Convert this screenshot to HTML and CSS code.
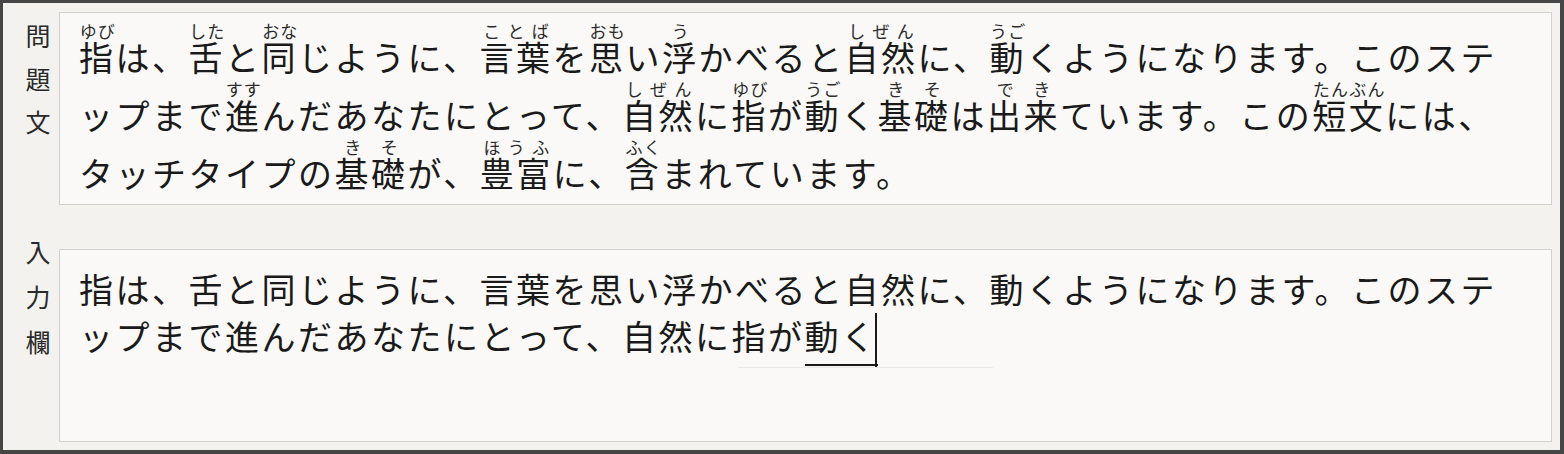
FILE: index.html
```html
<!DOCTYPE html>
<html lang="ja">
<head>
<meta charset="utf-8">
<title>タイピング練習</title>
<link rel="stylesheet" href="styles.css">
</head>
<body>
<div class="frame">
  <div class="row row-question">
    <div class="label label-question">問題文</div>
    <div class="box question"><ruby>指<rt>ゆび</rt></ruby>は、<ruby>舌<rt>した</rt></ruby>と<ruby>同<rt>おな</rt></ruby>じように、<ruby>言葉<rt>ことば</rt></ruby>を<ruby>思<rt>おも</rt></ruby>い<ruby>浮<rt>う</rt></ruby>かべると<ruby>自然<rt>しぜん</rt></ruby>に、<ruby>動<rt>うご</rt></ruby>くようになります。このステップまで<ruby>進<rt>すす</rt></ruby>んだあなたにとって、<ruby>自然<rt>しぜん</rt></ruby>に<ruby>指<rt>ゆび</rt></ruby>が<ruby>動<rt>うご</rt></ruby>く<ruby>基礎<rt>きそ</rt></ruby>は<ruby>出来<rt>でき</rt></ruby>ています。この<ruby>短文<rt>たんぶん</rt></ruby>には、タッチタイプの<ruby>基礎<rt>きそ</rt></ruby>が、<ruby>豊富<rt>ほうふ</rt></ruby>に、<ruby>含<rt>ふく</rt></ruby>まれています。</div>
  </div>
  <div class="row row-input">
    <div class="label label-input">入力欄</div>
    <div class="box input">指は、舌と同じように、言葉を思い浮かべると自然に、動くようになります。このステップまで進んだあなたにとって、自然に指が<span class="compose">動く</span><span class="caret"></span><span class="ime-line"></span></div>
  </div>
</div>
</body>
</html>
```
FILE: styles.css
```css
* { box-sizing: border-box; }
html, body { margin: 0; padding: 0; }
body {
  width: 1564px;
  height: 454px;
  font-family: "Noto Sans CJK JP", "Noto Sans", sans-serif;
  color: #1a1a1a;
  background: #f3f2ef;
}
.frame {
  width: 1564px;
  height: 454px;
  border-style: solid;
  border-color: #464646;
  border-width: 3px 4px 4px 3px;
  background: #f3f2ef;
  padding: 9px 8px 8px 0;
  display: flex;
  flex-direction: column;
  gap: 44px;
}
.row {
  display: grid;
  grid-template-columns: 56px 1fr;
  height: 193px;
}
.label {
  writing-mode: vertical-rl;
  font-size: 25px;
  line-height: 1;
  color: #2a2a2a;
  margin-left: 22px;
  width: 25px;
}
.label-question { letter-spacing: 18px; margin-top: 12px; }
.label-input { letter-spacing: 20px; margin-top: -9px; }
.box {
  position: relative;
  background: #faf9f7;
  border: 1px solid #d3d1cd;
  padding: 0 40px 0 19px;
  font-size: 34px;
  letter-spacing: 2.5px;
  line-break: loose;
  white-space: normal;
  overflow: hidden;
}
.question { padding-top: 15px; line-height: 58px; }
.input { padding-top: 15px; line-height: 47px; }
rt {
  font-size: 17px;
  letter-spacing: 0;
  line-height: 0.2;
  color: #2b2b2b;
}
.compose {
  padding-bottom: 4px;
  border-bottom: 2px solid #1a1a1a;
}
.caret {
  display: inline-block;
  width: 2px;
  height: 54px;
  background: #1a1a1a;
  vertical-align: -16.6px;
  margin-left: -2.5px;
}
.ime-line {
  position: absolute;
  left: 678px;
  top: 117px;
  width: 255px;
  height: 1px;
  background: #ebe9e6;
}
```
